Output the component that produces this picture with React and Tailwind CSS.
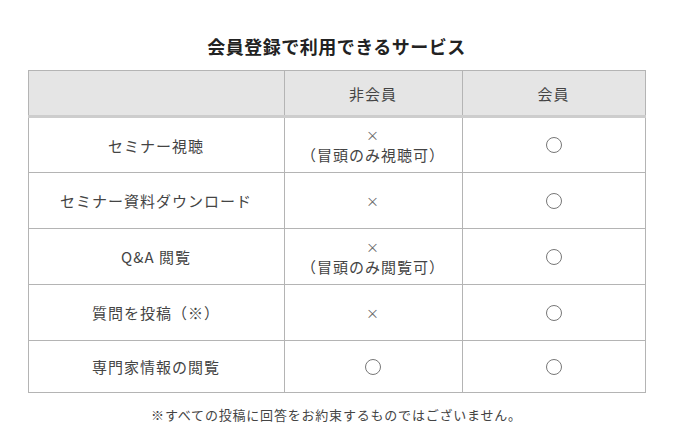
const ROWS = [
  { name: "セミナー視聴", guest: ["×", "（冒頭のみ視聴可）"], member: true },
  { name: "セミナー資料ダウンロード", guest: ["×"], member: true },
  { name: "Q&A 閲覧", guest: ["×", "（冒頭のみ閲覧可）"], member: true },
  { name: "質問を投稿（※）", guest: ["×"], member: true },
  { name: "専門家情報の閲覧", guest: null, member: true },
];

function Circle() {
  return <span className="inline-block h-[16px] w-[16px] rounded-full border border-[#777]" />;
}

export default function App() {
  return (
    <div className="min-h-screen bg-white pt-[34px] font-['Noto_Sans_CJK_JP','Noto_Sans',sans-serif] text-[#444]">
      <h1 className="text-center text-[18px] font-bold leading-[24px] tracking-[0.5px] text-[#222]">
        会員登録で利用できるサービス
      </h1>
      <table className="mx-auto mt-[12px] w-[618px] border-collapse text-[15px] leading-[21px] tracking-[1px]">
        <thead>
          <tr className="h-[46px] bg-[#e5e5e5]">
            <th className="w-[256px] border border-b-[3px] border-[#b4b4b4] border-b-[#cdcdcd]" />
            <th className="w-[178px] border border-b-[3px] border-[#b4b4b4] border-b-[#cdcdcd] font-normal">非会員</th>
            <th className="border border-b-[3px] border-[#b4b4b4] border-b-[#cdcdcd] font-normal">会員</th>
          </tr>
        </thead>
        <tbody>
          {ROWS.map((row, i) => {
            const h = i === ROWS.length - 1 ? "h-[52px]" : "h-[56px]";
            return (
              <tr key={row.name} className={h}>
                <td className="border border-[#b4b4b4] text-center">{row.name}</td>
                <td className="border border-[#b4b4b4] text-center">
                  {row.guest ? (
                    row.guest.map((t) => (
                      <div key={t} className={t === "×" ? "text-[13px] leading-[19px] text-[#666]" : ""}>
                        {t}
                      </div>
                    ))
                  ) : (
                    <div className="flex justify-center"><Circle /></div>
                  )}
                </td>
                <td className="border border-[#b4b4b4] text-center">
                  <div className="flex justify-center"><Circle /></div>
                </td>
              </tr>
            );
          })}
        </tbody>
      </table>
      <p className="mt-[12px] text-center text-[13px] leading-[19px] tracking-[0.8px] text-[#444]">
        ※すべての投稿に回答をお約束するものではございません。
      </p>
    </div>
  );
}
